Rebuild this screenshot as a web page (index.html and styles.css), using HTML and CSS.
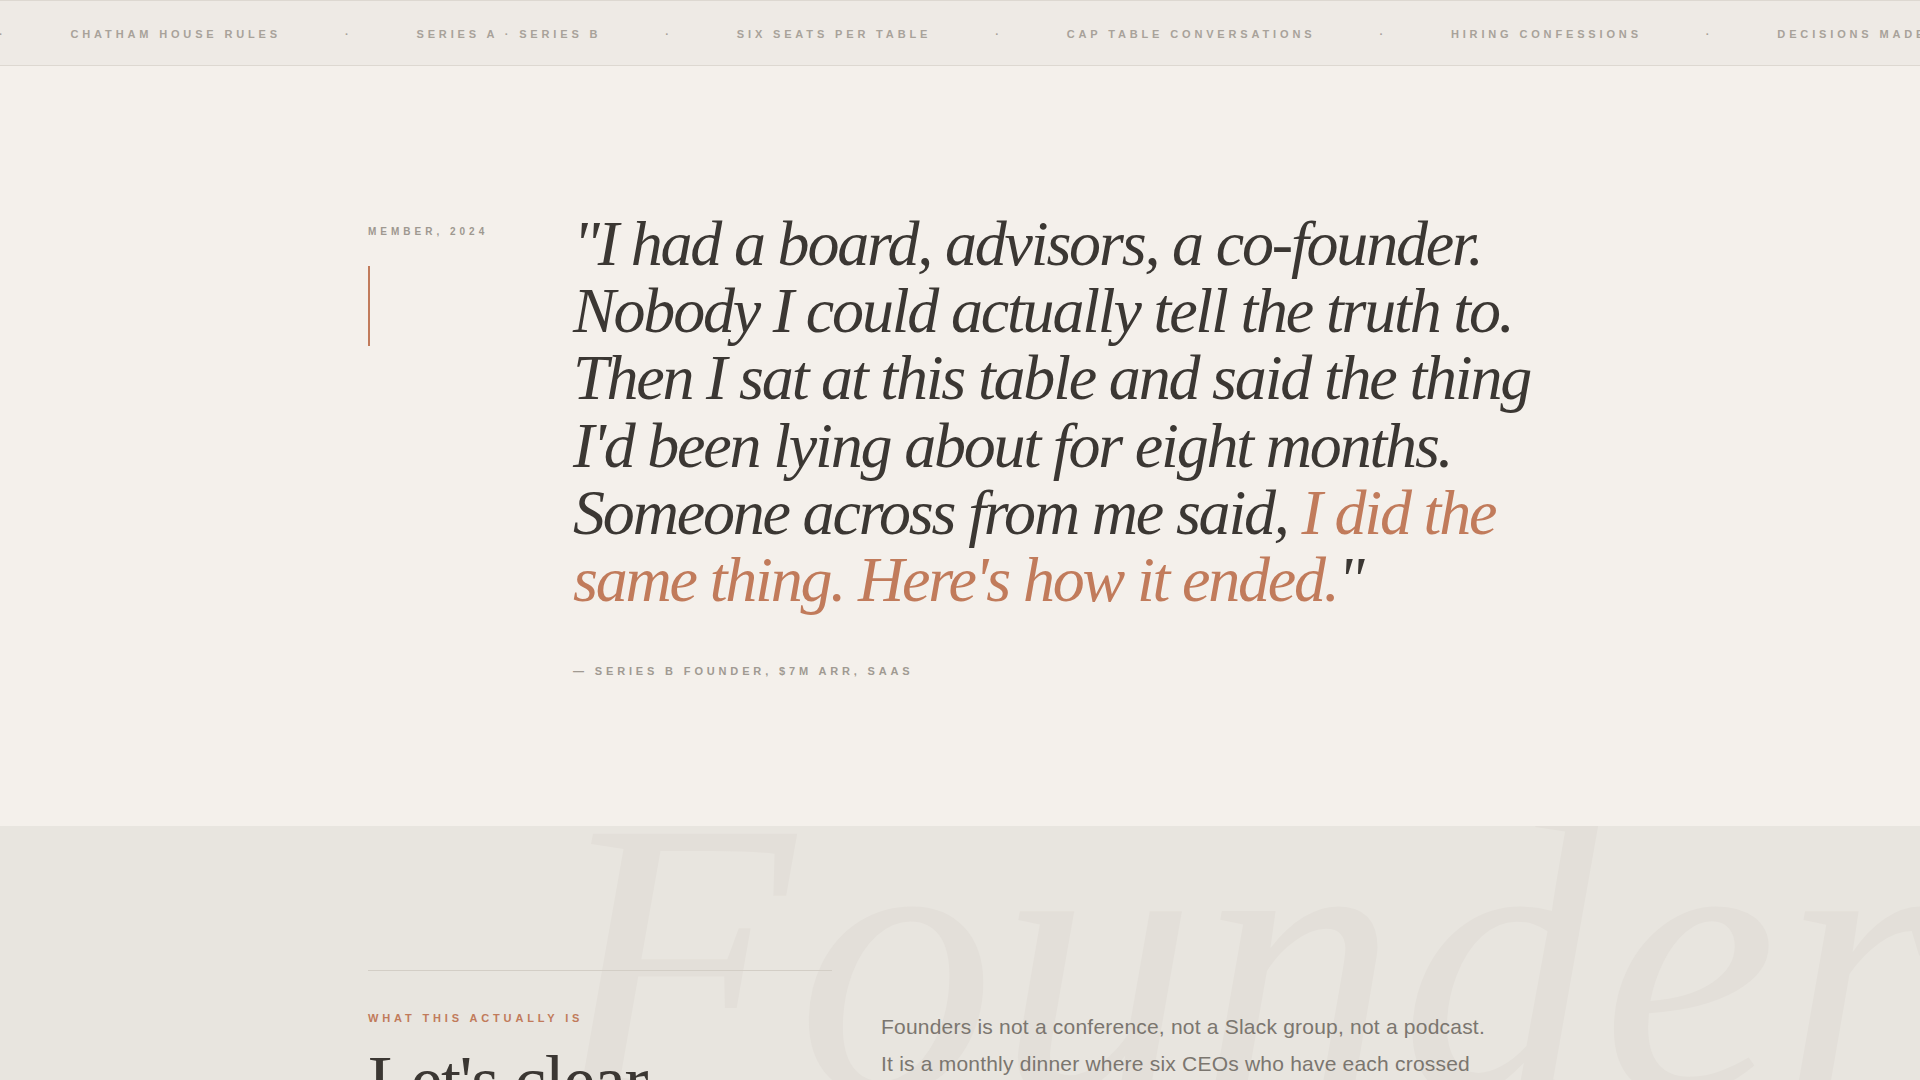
FILE: index.html
```html
<!DOCTYPE html>
<html lang="en">
<head>
<meta charset="utf-8">
<title>Founders</title>
<link rel="stylesheet" href="styles.css">
</head>
<body>
  <div class="ticker">
    <div class="ticker-track">
      <span class="dot">·</span>
      <span class="item">Chatham House Rules</span>
      <span class="dot">·</span>
      <span class="item">Series A · Series B</span>
      <span class="dot">·</span>
      <span class="item">Six Seats Per Table</span>
      <span class="dot">·</span>
      <span class="item">Cap Table Conversations</span>
      <span class="dot">·</span>
      <span class="item">Hiring Confessions</span>
      <span class="dot">·</span>
      <span class="item">Decisions Made Off The Record</span>
      <span class="dot">·</span>
    </div>
  </div>

  <section class="testimonial">
    <div class="container testimonial-grid">
      <div class="meta">
        <div class="meta-label">Member, 2024</div>
        <div class="meta-bar"></div>
      </div>
      <div class="quote-wrap">
        <blockquote class="quote">"I had a board, advisors, a co-founder. Nobody I could actually tell the truth to. Then I sat at this table and said the thing I'd been lying about for eight months. Someone across from me said, <span class="accent">I did the same thing. Here's how it ended.</span>"</blockquote>
        <div class="attribution">— Series B Founder, $7M ARR, SaaS</div>
      </div>
    </div>
  </section>

  <section class="about">
    <div class="watermark" aria-hidden="true">Founders</div>
    <div class="container about-grid">
      <div class="about-left">
        <div class="eyebrow">What this actually is</div>
        <h2 class="about-title">Let's clear something up.</h2>
      </div>
      <div class="about-right">
        <p class="about-text">Founders is not a conference, not a Slack group, not a podcast. It is a monthly dinner where six CEOs who have each crossed the same stretch of road sit down and speak plainly.</p>
      </div>
    </div>
  </section>
</body>
</html>
```

FILE: styles.css
```css
* { box-sizing: border-box; }

html, body {
  margin: 0;
  padding: 0;
}

body {
  background: #f4f0eb;
  color: #3b3733;
  font-family: "Liberation Sans", Arial, sans-serif;
  overflow: hidden;
}

.container {
  width: 1184px;
  margin: 0 auto;
}

/* Ticker */
.ticker {
  height: 66px;
  padding-top: 2px;
  background: #eeeae5;
  border-top: 1px solid #ddd8d1;
  border-bottom: 1px solid #ddd8d1;
  overflow: hidden;
  display: flex;
  align-items: center;
}

.ticker-track {
  display: flex;
  align-items: center;
  gap: 64px;
  white-space: nowrap;
  margin-left: -1px;
}

.ticker-track .item,
.ticker-track .dot {
  font-size: 11px;
  font-weight: 700;
  letter-spacing: 0.35em;
  text-transform: uppercase;
  color: #a8a29a;
}

/* Testimonial */
.testimonial {
  padding: 144px 0 147px;
}

.testimonial-grid {
  display: grid;
  grid-template-columns: 141px 1fr;
  column-gap: 64px;
}

.meta {
  padding-top: 14px;
}

.meta-label {
  font-size: 10px;
  font-weight: 700;
  letter-spacing: 0.4em;
  line-height: 15px;
  text-transform: uppercase;
  color: #9e9890;
}

.meta-bar {
  width: 2px;
  height: 80px;
  margin-top: 27px;
  background: #c17b5b;
}

.quote {
  margin: 0;
  font-family: "Liberation Serif", "Times New Roman", serif;
  font-style: italic;
  font-size: 64px;
  line-height: 1.05;
  letter-spacing: -0.034em;
  color: #3b3733;
}

.accent {
  color: #c17b5b;
}

.attribution {
  margin-top: 50px;
  font-size: 11px;
  font-weight: 700;
  letter-spacing: 0.35em;
  line-height: 16px;
  text-transform: uppercase;
  color: #a09a92;
}

/* About */
.about {
  position: relative;
  background: #e8e5df;
  padding-top: 144px;
  min-height: 600px;
  overflow: hidden;
}

.watermark {
  position: absolute;
  top: -64px;
  left: 552px;
  font-family: "Liberation Serif", "Times New Roman", serif;
  font-style: italic;
  font-size: 396px;
  line-height: 1;
  letter-spacing: 0.008em;
  color: #e3dfd9;
  white-space: nowrap;
  pointer-events: none;
  z-index: 0;
}

.about-grid {
  position: relative;
  z-index: 1;
  display: grid;
  grid-template-columns: 464px 1fr;
  column-gap: 49px;
}

.about-left {
  border-top: 1px solid #d3cec6;
  padding-top: 39px;
}

.eyebrow {
  font-size: 11px;
  font-weight: 700;
  letter-spacing: 0.35em;
  line-height: 16px;
  text-transform: uppercase;
  color: #c17b5b;
}

.about-title {
  margin: 16px 0 0;
  font-family: "Liberation Serif", "Times New Roman", serif;
  font-weight: 400;
  font-size: 72px;
  line-height: 1.1;
  letter-spacing: -0.02em;
  color: #3b3733;
}

.about-right {
  padding-top: 39px;
}

.about-text {
  margin: 0;
  max-width: 616px;
  font-size: 21px;
  line-height: 1.75;
  letter-spacing: 0.01em;
  color: #7b766f;
}
```
